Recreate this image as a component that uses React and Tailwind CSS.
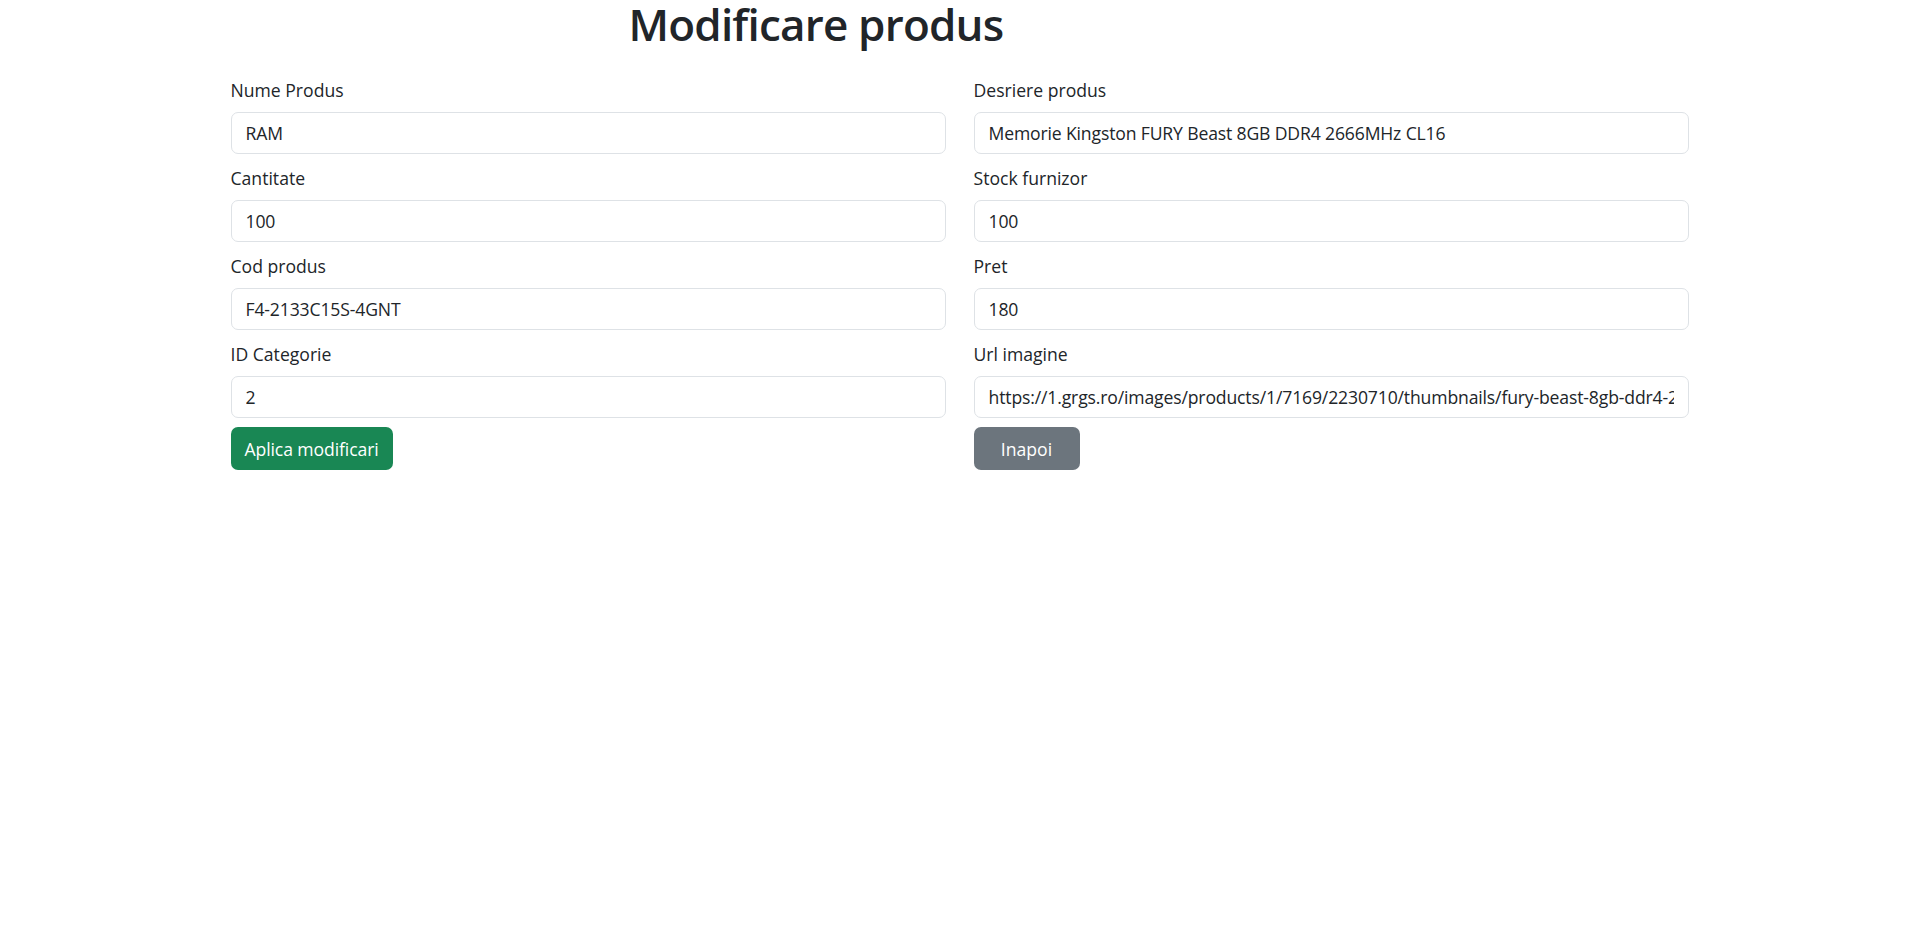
import React from "react";

const font = { fontFamily: '"Open Sans", "Noto Sans", "Liberation Sans", sans-serif' };

function Field({ label, value }) {
  return (
    <div className="flex flex-col">
      <label className="block text-[17.6px] leading-[26px] text-[#212529] mb-[9px]">{label}</label>
      <input
        readOnly
        defaultValue={value}
        className="block w-full h-[42px] px-[14px] text-[17.6px] tracking-[-0.15px] text-[#212529] bg-white border border-[#dee2e6] rounded-[7px] outline-none"
      />
    </div>
  );
}

export default function App() {
  return (
    <div className="min-h-[935px] bg-white text-[#212529]" style={font}>
      <div className="w-[1458px] mx-auto">
        <h1 className="ml-[398px] -mt-[5px] text-[44px] leading-[58px] font-semibold text-[#212529] tracking-[-0.8px]">
          Modificare produs
        </h1>
        <div className="grid grid-cols-2 gap-x-[28px] gap-y-[11px] mt-[24px]">
          <Field label="Nume Produs" value="RAM" />
          <Field label="Desriere produs" value="Memorie Kingston FURY Beast 8GB DDR4 2666MHz CL16" />
          <Field label="Cantitate" value="100" />
          <Field label="Stock furnizor" value="100" />
          <Field label="Cod produs" value="F4-2133C15S-4GNT" />
          <Field label="Pret" value="180" />
          <Field label="ID Categorie" value="2" />
          <Field
            label="Url imagine"
            value="https://1.grgs.ro/images/products/1/7169/2230710/thumbnails/fury-beast-8gb-ddr4-2666mhz-cl16.jpg"
          />
          <div className="-mt-[2px]">
            <button className="h-[43px] px-[14px] rounded-[7px] bg-[#198754] text-white text-[17.6px] leading-[26px] tracking-[-0.1px]">
              Aplica modificari
            </button>
          </div>
          <div className="-mt-[2px]">
            <button className="h-[43px] w-[106px] rounded-[7px] bg-[#6c757d] text-white text-[17.6px] leading-[26px]">
              Inapoi
            </button>
          </div>
        </div>
      </div>
    </div>
  );
}
